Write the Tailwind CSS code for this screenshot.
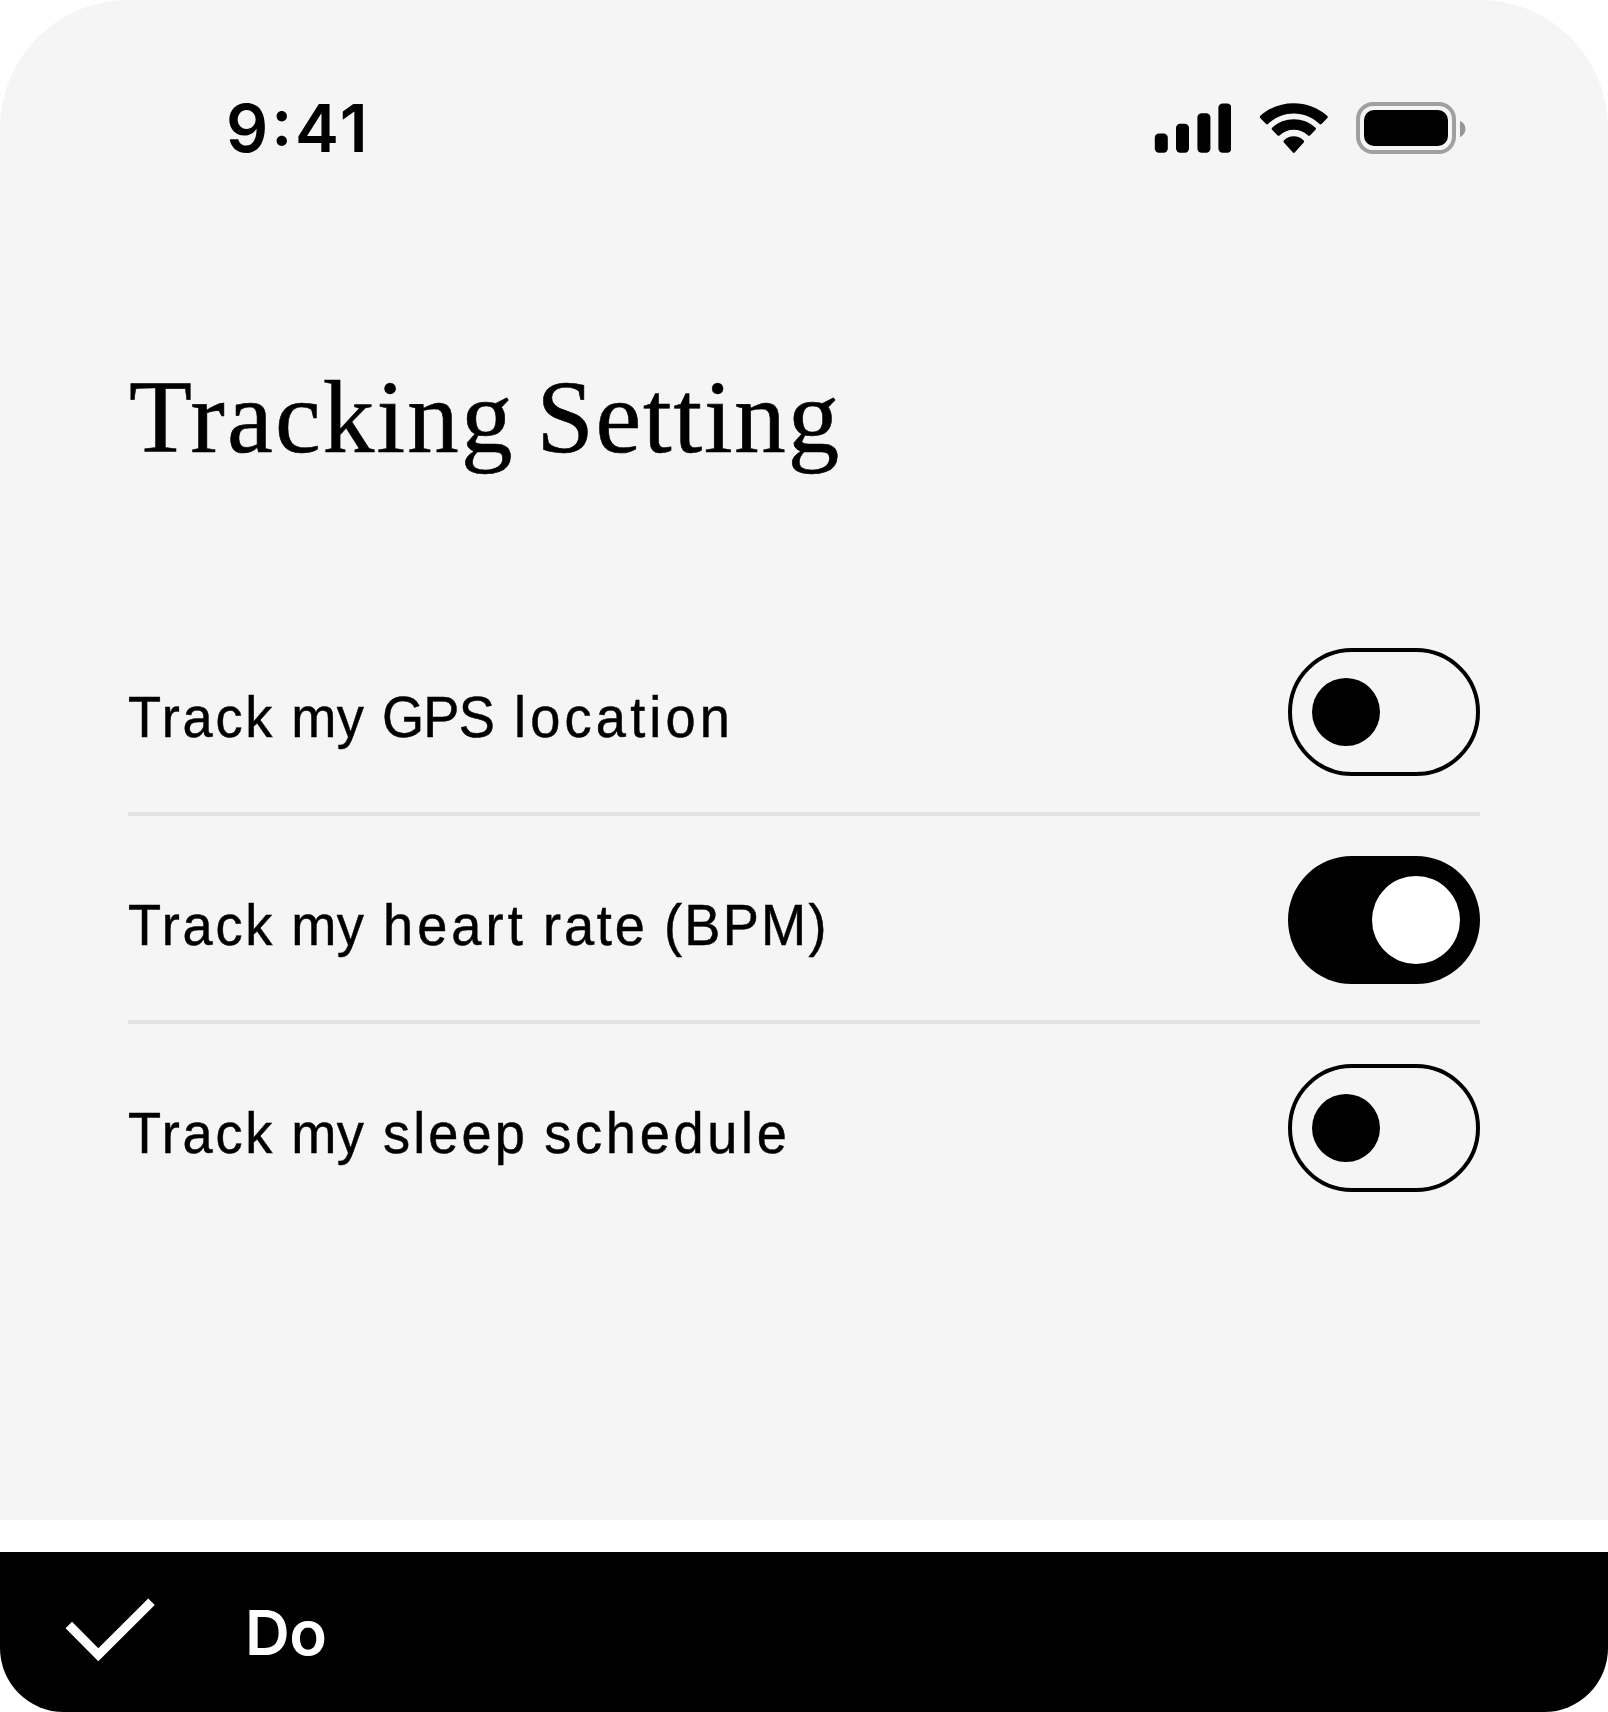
<!DOCTYPE html>
<html lang="en">
<head>
<meta charset="utf-8">
<title>Tracking Setting</title>
<script src="https://cdn.jsdelivr.net/npm/@tailwindcss/browser@4"></script>
</head>
<body class="bg-white text-black">
<div class="flex h-[1712px] w-[1608px] flex-col gap-8 overflow-hidden">
  <main class="h-[1520px] rounded-t-[128px] bg-[#f5f5f5] px-32">
    <!-- Status bar -->
    <header class="flex h-[366px] items-start justify-between pt-[95px] pl-[98px] pr-[14px]">
      <time class="font-['Inter',sans-serif] text-[66px] leading-[66px] font-semibold tracking-[2.9px]">9<span class="relative -top-[7px]">:</span>41</time>
      <div class="flex items-start gap-7 pt-[7px]">
        <svg class="h-[52px] w-[77px]" viewBox="0 0 77 52" fill="currentColor" aria-label="Signal">
          <rect x=".8" y="31.5" width="13" height="19.2" rx="4.2"/>
          <rect x="22" y="21.7" width="13" height="29" rx="4.2"/>
          <rect x="43.4" y="11.3" width="13" height="39.4" rx="4.2"/>
          <rect x="64.4" y="1.4" width="13" height="49.3" rx="4.2"/>
        </svg>
        <svg class="h-[52px] w-[69px]" viewBox="0 0 68.6 52" fill="currentColor" aria-label="Wi-Fi">
          <path transform="translate(.3 .5)" d="M34.3 11C43.9 11 53.2 14.9 60.1 21.5C60.7 22 61.5 22 62 21.5L67.9 15.4C68.5 14.8 68.5 13.9 67.9 13.4C49.1 -3.6 19.5 -3.6 .7 13.4C.1 13.9 .1 14.8 .7 15.4L6.6 21.5C7.1 22 7.9 22 8.5 21.5C15.4 14.9 24.7 11 34.3 11Z"/>
          <path transform="translate(.3 .5)" d="M34.3 27.3C39.6 27.3 44.7 29.3 48.6 32.9C49.1 33.5 50 33.5 50.5 32.9L56 27.3C56.6 26.7 56.6 25.8 56 25.3C43.8 14 24.8 14 12.6 25.3C12 25.8 12 26.7 12.6 27.3L18.1 32.9C18.6 33.5 19.5 33.5 20 32.9C23.9 29.3 29 27.3 34.3 27.3Z"/>
          <path transform="translate(.3 .5)" d="M44.2 39.9C44.8 39.3 44.8 38.4 44.2 37.9C38.5 32.5 30.1 32.5 24.4 37.9C23.8 38.4 23.8 39.3 24.4 39.9L33.4 50C33.9 50.6 34.7 50.6 35.2 50Z"/>
        </svg>
        <svg class="h-[52px] w-[110px]" viewBox="0 0 110 52" aria-label="Battery">
          <rect x="2" y="2" width="96" height="48" rx="15.2" fill="none" stroke="#a0a0a0" stroke-width="4"/>
          <rect x="8" y="8" width="84" height="36" rx="10" fill="#000"/>
          <path d="M104 19V35.2C107.3 33.8 109.4 30.6 109.4 27.1S107.3 20.4 104 19Z" fill="#969696"/>
        </svg>
      </div>
    </header>

    <h1 class="h-[242px] pl-[1px] font-['Liberation_Serif',serif] text-[103px] leading-[103px] font-normal whitespace-nowrap [-webkit-text-stroke:0.6px_black] [word-spacing:-4px]"><span class="tracking-[2.2px]">Tracking</span> <span class="tracking-[1.8px]">Setting</span></h1>

    <ul class="font-['Liberation_Sans',sans-serif] text-[57px] leading-[57px] whitespace-nowrap [word-spacing:1.2px]">
      <li class="flex h-52 items-center justify-between border-b-4 border-[#e2e2e2] pt-1">
        <span class="origin-left scale-x-[0.95] pt-[10px] [-webkit-text-stroke:0.5px_black]"><span class="tracking-[2.9px]">Track</span> <span class="tracking-[0.2px]">my</span> <span class="ml-0.5 tracking-[-0.8px]">GPS</span> <span class="ml-1 tracking-[4.4px]">location</span></span>
        <button class="flex h-32 w-48 items-center rounded-full border-4 border-black pl-5" role="switch" aria-checked="false"><span class="size-[68px] rounded-full bg-black"></span></button>
      </li>
      <li class="flex h-52 items-center justify-between border-b-4 border-[#e2e2e2] pt-1">
        <span class="origin-left scale-x-[0.95] pt-[10px] [-webkit-text-stroke:0.5px_black]"><span class="tracking-[2.9px]">Track</span> <span class="tracking-[0.2px]">my</span> <span class="ml-[3px] tracking-[4.3px]">heart</span> <span class="tracking-[3px]">rate</span> <span class="tracking-[2.4px]">(BPM)</span></span>
        <button class="flex h-32 w-48 items-center justify-end rounded-full bg-black pr-5" role="switch" aria-checked="true"><span class="size-[88px] rounded-full bg-white"></span></button>
      </li>
      <li class="flex h-52 items-center justify-between border-b-4 border-transparent pt-1">
        <span class="origin-left scale-x-[0.95] pt-[10px] [-webkit-text-stroke:0.5px_black]"><span class="tracking-[2.9px]">Track</span> <span class="tracking-[0.2px]">my</span> <span class="ml-[3px] tracking-[3.3px]">sleep</span> <span class="tracking-[3.9px]">schedule</span></span>
        <button class="flex h-32 w-48 items-center rounded-full border-4 border-black pl-5" role="switch" aria-checked="false"><span class="size-[68px] rounded-full bg-black"></span></button>
      </li>
    </ul>
  </main>

  <!-- Verdict bar -->
  <footer class="flex h-40 items-center gap-[85px] rounded-b-[64px] bg-black pl-16 text-white">
    <svg class="h-24 w-24" viewBox="0 0 96 96" fill="none" stroke="currentColor" stroke-width="9.2" aria-hidden="true">
      <path d="M4.8 41.1L34.3 70.7L87.5 17.7"/>
    </svg>
    <span class="font-['Inter',sans-serif] text-[62px] leading-[62px] font-semibold tracking-[-0.5px] pt-px">Do</span>
  </footer>
</div>
</body>
</html>
